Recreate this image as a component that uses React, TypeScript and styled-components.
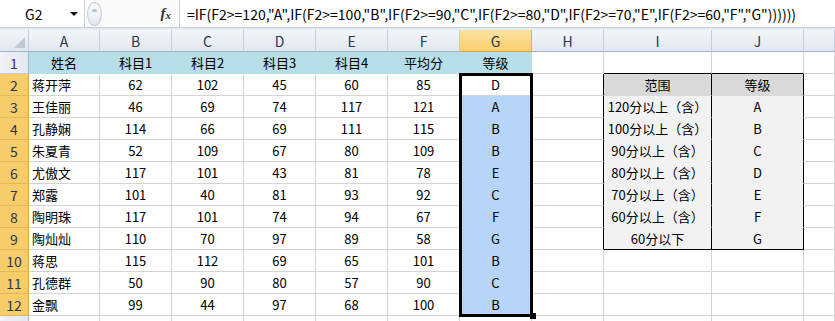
import { Fragment } from "react";
import styled, { createGlobalStyle } from "styled-components";

const GlobalStyle = createGlobalStyle`
  html, body {
    margin: 0;
    padding: 0;
    background: #fff;
  }
  body {
    font-family: "Noto Sans CJK SC", "Liberation Sans", sans-serif;
  }
`

const GRID_LINE = '#d4d4d4'
const HEAD_LINE = '#c3ccd8'
const ROW1_FILL = '#b7dde8'
const SEL_FILL = '#b6d5f8'
const TABLE_HEAD = '#d9d9d9'
const TABLE_BODY = '#f2f2f2'

const Sheet = styled.div`
  width: 835px;
  height: 321px;
  overflow: hidden;
  background: #fff;
`

const FormulaBar = styled.div`
  display: flex;
  height: 28px;
  box-sizing: border-box;
  border-bottom: 1px solid #c9d0d9;
  background: #fafbfc;
`

const NameBox = styled.div`
  width: 85px;
  box-sizing: border-box;
  display: flex;
  align-items: center;
  justify-content: space-between;
  padding: 0 4px 0 25px;
  background: #fff;
  border-right: 1px solid #c9d0d9;
  font-size: 14px;
  color: #000;
`

const Caret = styled.span`
  width: 0;
  height: 0;
  border-left: 4px solid transparent;
  border-right: 4px solid transparent;
  border-top: 4px solid #111;
  margin-right: 2px;
`

const FxZone = styled.div`
  width: 95px;
  display: flex;
  align-items: center;
  justify-content: space-between;
  padding: 0 8px 0 2px;
  box-sizing: border-box;
  border-right: 1px solid #c9d0d9;
`

const Knob = styled.div`
  width: 15px;
  height: 24px;
  box-sizing: border-box;
  border-radius: 50%;
  border: 1px solid #c3cad3;
  background: linear-gradient(#fdfdfe, #e3e8ee);
  display: flex;
  justify-content: center;
  padding-top: 6px;
  &::after {
    content: "";
    width: 5px;
    height: 3px;
    border-radius: 2px;
    background: #b9c1cb;
  }
`

const Fx = styled.span`
  font-family: "Liberation Serif", serif;
  font-style: italic;
  font-weight: bold;
  font-size: 15px;
  color: #333;
  sub {
    font-size: 11px;
    vertical-align: -1px;
  }
`

const FormulaText = styled.div`
  flex: 1;
  display: flex;
  align-items: center;
  padding-left: 7px;
  background: #fff;
  font-size: 14px;
  color: #000;
  white-space: nowrap;
  overflow: hidden;
`

const Band = styled.div`
  height: 2px;
  background: #e6ebf1;
`

const GridWrap = styled.div`
  position: relative;
  height: 291px;
  overflow: hidden;
`

const Grid = styled.div`
  display: grid;
  grid-template-columns: 29px 71px repeat(7, 72px) 108px 92px 1fr;
  grid-auto-rows: 22px;
`

const Corner = styled.div`
  position: relative;
  box-sizing: border-box;
  background: linear-gradient(#f3f6fa, #e2e8f0);
  border-right: 1px solid ${HEAD_LINE};
  border-bottom: 1px solid #9fb2c7;
  &::after {
    content: "";
    position: absolute;
    right: 3px;
    bottom: 3px;
    width: 0;
    height: 0;
    border-left: 11px solid transparent;
    border-bottom: 11px solid #c1c8d1;
  }
`

const ColHead = styled.div<{ $active?: boolean }>`
  box-sizing: border-box;
  display: flex;
  align-items: center;
  justify-content: center;
  background: ${p => p.$active ? 'linear-gradient(#fbe3a0, #f6ce6c)' : 'linear-gradient(#f3f6fa, #e2e8f0)'};
  border-right: 1px solid ${p => p.$active ? '#e2b04f' : HEAD_LINE};
  border-bottom: 1px solid ${p => p.$active ? '#d9a43c' : '#9fb2c7'};
  font-size: 14px;
  color: #2a3650;
`

const RowHead = styled.div<{ $active?: boolean }>`
  box-sizing: border-box;
  display: flex;
  align-items: center;
  justify-content: center;
  background: ${p => p.$active ? '#f7cd6a' : 'linear-gradient(90deg, #f0f3f8, #e2e8f0)'};
  border-right: 1px solid ${p => p.$active ? '#d9a43c' : '#9fb2c7'};
  border-bottom: 1px solid ${p => p.$active ? '#e5b85a' : HEAD_LINE};
  font-size: 14px;
  color: #2a3650;
`

const Cell = styled.div<{ $bg?: string; $left?: boolean; $lineR?: string; $lineB?: string }>`
  box-sizing: border-box;
  display: flex;
  align-items: center;
  justify-content: ${p => p.$left ? 'flex-start' : 'center'};
  padding: 0 3px;
  background: ${p => p.$bg ?? '#fff'};
  border-right: 1px solid ${p => p.$lineR ?? GRID_LINE};
  border-bottom: 1px solid ${p => p.$lineB ?? GRID_LINE};
  font-size: 13px;
  color: #000;
  white-space: nowrap;
  overflow: hidden;
`

const Selection = styled.div`
  position: absolute;
  left: 459px;
  top: 43px;
  width: 74px;
  height: 244px;
  box-sizing: border-box;
  border: 3px solid #000;
  pointer-events: none;
  &::after {
    content: "";
    position: absolute;
    right: -6px;
    bottom: -5px;
    width: 6px;
    height: 6px;
    background: #000;
  }
`

const columns = ['A', 'B', 'C', 'D', 'E', 'F', 'G', 'H', 'I', 'J', '']

const headers = ['姓名', '科目1', '科目2', '科目3', '科目4', '平均分', '等级']

const students: [string, number, number, number, number, number, string][] = [
  ['蒋开萍', 62, 102, 45, 60, 85, 'D'],
  ['王佳丽', 46, 69, 74, 117, 121, 'A'],
  ['孔静娴', 114, 66, 69, 111, 115, 'B'],
  ['朱夏青', 52, 109, 67, 80, 109, 'B'],
  ['尤傲文', 117, 101, 43, 81, 78, 'E'],
  ['郑露', 101, 40, 81, 93, 92, 'C'],
  ['陶明珠', 117, 101, 74, 94, 67, 'F'],
  ['陶灿灿', 110, 70, 97, 89, 58, 'G'],
  ['蒋思', 115, 112, 69, 65, 101, 'B'],
  ['孔德群', 50, 90, 80, 57, 90, 'C'],
  ['金飘', 99, 44, 97, 68, 100, 'B'],
]

const grades: [string, string][] = [
  ['范围', '等级'],
  ['120分以上（含）', 'A'],
  ['100分以上（含）', 'B'],
  ['90分以上（含）', 'C'],
  ['80分以上（含）', 'D'],
  ['70分以上（含）', 'E'],
  ['60分以上（含）', 'F'],
  ['60分以下', 'G'],
]

const FORMULA = '=IF(F2>=120,"A",IF(F2>=100,"B",IF(F2>=90,"C",IF(F2>=80,"D",IF(F2>=70,"E",IF(F2>=60,"F","G"))))))'

// row index r: 1..13, returns the cells for columns A..(extra)
function renderRow(r: number) {
  const cells = []
  const student = r >= 2 && r <= 12 ? students[r - 2] : null
  const grade = r >= 2 && r <= 9 ? grades[r - 2] : null

  // A..G
  for (let c = 0; c < 7; c++) {
    if (r === 1) {
      cells.push(<Cell key={c} $bg={ROW1_FILL} $lineR={ROW1_FILL} $lineB={ROW1_FILL}>{headers[c]}</Cell>)
    } else if (student) {
      const selected = c === 6 && r >= 3
      cells.push(
        <Cell
          key={c}
          $left={c === 0}
          $bg={selected ? SEL_FILL : undefined}
          $lineR={selected ? SEL_FILL : undefined}
          $lineB={selected ? SEL_FILL : undefined}
        >
          {student[c]}
        </Cell>
      )
    } else {
      cells.push(<Cell key={c} />)
    }
  }

  // H
  cells.push(<Cell key="h" $lineR={grade ? '#000' : undefined} />)

  // I, J
  if (grade) {
    const bg = r === 2 ? TABLE_HEAD : TABLE_BODY
    const last = r === 9
    cells.push(<Cell key="i" $bg={bg} $lineR="#000" $lineB={last ? '#000' : bg}>{grade[0]}</Cell>)
    cells.push(<Cell key="j" $bg={bg} $lineR="#000" $lineB={last ? '#000' : bg}>{grade[1]}</Cell>)
  } else {
    cells.push(<Cell key="i" $lineB={r === 1 ? '#000' : undefined} />)
    cells.push(<Cell key="j" $lineB={r === 1 ? '#000' : undefined} />)
  }

  cells.push(<Cell key="k" />)
  return cells
}

export default function App() {
  const rows = Array.from({ length: 13 }, (_, i) => i + 1)
  return (
    <>
      <GlobalStyle />
      <Sheet>
        <FormulaBar>
          <NameBox>
            G2
            <Caret />
          </NameBox>
          <FxZone>
            <Knob />
            <Fx>f<sub>x</sub></Fx>
          </FxZone>
          <FormulaText>{FORMULA}</FormulaText>
        </FormulaBar>
        <Band />
        <GridWrap>
          <Grid>
            <Corner />
            {columns.map((col, i) => (
              <ColHead key={i} $active={col === 'G'}>{col}</ColHead>
            ))}
            {rows.map(r => (
              <Fragment key={r}>
                {/* row 13 is only a sliver at the bottom edge, its number isn't visible */}
                <RowHead $active={r >= 2 && r <= 12}>{r < 13 ? r : ''}</RowHead>
                {renderRow(r)}
              </Fragment>
            ))}
          </Grid>
          <Selection />
        </GridWrap>
      </Sheet>
    </>
  )
}
